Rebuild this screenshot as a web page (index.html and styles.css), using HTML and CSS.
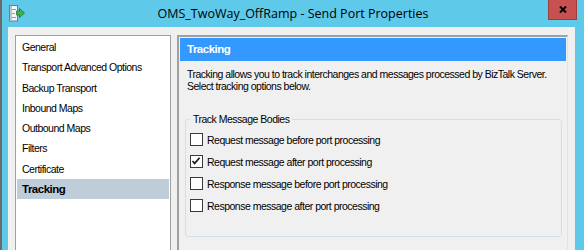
FILE: index.html
```html
<!DOCTYPE html>
<html>
<head>
<meta charset="utf-8">
<link rel="stylesheet" href="styles.css">
</head>
<body>
<div class="window">
  <div class="titlebar">
    <div class="tb-left">
      <svg class="app-icon" width="16" height="17" viewBox="0 0 16 17">
        <rect x="0.5" y="0.5" width="8" height="15.5" fill="#F6F7F9" stroke="#6A7E9C"/>
        <rect x="1" y="1" width="2" height="14.5" fill="#B9C6D8"/>
        <line x1="3" y1="4.5" x2="7" y2="4.5" stroke="#8C9BB3"/>
        <line x1="3" y1="8.5" x2="6" y2="8.5" stroke="#8C9BB3"/>
        <line x1="3" y1="12.5" x2="7" y2="12.5" stroke="#8C9BB3"/>
        <polygon points="7.5,6 10.5,6 10.5,3.5 15.5,8 10.5,12.5 10.5,10 7.5,10" fill="#43B14B" stroke="#23792B" stroke-width="0.8"/>
      </svg>
    </div>
    <div class="title">OMS_TwoWay_OffRamp - Send Port Properties</div>
    <div class="tb-right">
      <div class="close">
        <svg width="8" height="7" viewBox="0 0 8 7"><path d="M1 0.5 L7 6.5 M7 0.5 L1 6.5" stroke="#000" stroke-width="2"/></svg>
      </div>
    </div>
  </div>
  <div class="client">
    <ul class="nav">
      <li>General</li>
      <li>Transport Advanced Options</li>
      <li>Backup Transport</li>
      <li>Inbound Maps</li>
      <li>Outbound Maps</li>
      <li>Filters</li>
      <li>Certificate</li>
      <li class="selected">Tracking</li>
    </ul>
    <div class="panel">
      <div class="panel-header">Tracking</div>
      <div class="panel-body">
        <p class="desc">Tracking allows you to track interchanges and messages processed by BizTalk Server.<br>Select tracking options below.</p>
        <fieldset class="group">
          <legend>Track Message Bodies</legend>
          <div class="option"><span class="checkbox"></span><span class="label">Request message before port processing</span></div>
          <div class="option"><span class="checkbox"><svg width="11" height="11" viewBox="0 0 11 11"><path d="M1.5 5 L3.7 7.4 L8.6 1.8" fill="none" stroke="#1C1C1C" stroke-width="1.7"/></svg></span><span class="label">Request message after port processing</span></div>
          <div class="option"><span class="checkbox"></span><span class="label">Response message before port processing</span></div>
          <div class="option"><span class="checkbox"></span><span class="label">Response message after port processing</span></div>
        </fieldset>
      </div>
    </div>
  </div>
</div>
</body>
</html>
```
FILE: styles.css
```css
html, body {
  margin: 0;
  padding: 0;
}
body {
  width: 584px;
  height: 250px;
  overflow: hidden;
  background: #6B6B6B;
  font-family: "Liberation Sans", Arial, sans-serif;
  font-size: 10.5px;
  letter-spacing: -0.5px;
  color: #000;
}
.window {
  margin-left: 2px;
  height: 262px;
  background: #5FC9EA;
  display: flex;
  flex-direction: column;
}
.titlebar {
  height: 27px;
  flex: none;
  display: grid;
  grid-template-columns: 1fr auto 1fr;
}
.tb-left {
  display: flex;
  align-items: flex-start;
  padding: 5px 0 0 7px;
}
.app-icon {
  display: block;
}
.title {
  font-family: "Open Sans", "Liberation Sans", sans-serif;
  font-size: 12.5px;
  letter-spacing: 0;
  line-height: 27px;
  color: #000;
  white-space: nowrap;
}
.tb-right {
  display: flex;
  justify-content: flex-end;
  align-items: flex-start;
  padding-right: 7px;
}
.close {
  width: 29px;
  height: 20px;
  box-sizing: border-box;
  background: #C75050;
  border: 1px solid #9E3D3D;
  border-top: 0;
  display: flex;
  align-items: center;
  justify-content: center;
}
.close svg {
  display: block;
}
.client {
  flex: 1;
  margin: 0 9px 0 6px;
  background: #F0F0F0;
  display: flex;
  gap: 6px;
  padding: 8px 7px 0 7px;
}
.nav {
  width: 156px;
  box-sizing: border-box;
  flex: none;
  border: 1px solid #A0A0A0;
  background: #FFFFFF;
  margin: 0;
  padding: 1px;
  list-style: none;
}
.nav li {
  height: 20.3px;
  line-height: 20.3px;
  padding-left: 5px;
  white-space: nowrap;
}
.nav li.selected {
  background: #BFCDDB;
  font-weight: bold;
  font-size: 11.5px;
}
.panel {
  flex: 1;
  border-left: 2px solid #A0A0A0;
  border-top: 2px solid #A0A0A0;
  border-right: 1px solid #E3E3E3;
  padding: 1px 1px 0 1px;
  display: flex;
  flex-direction: column;
}
.panel-header {
  height: 23px;
  flex: none;
  background: #3399FF;
  color: #FFFFFF;
  font-weight: bold;
  font-size: 11.5px;
  line-height: 23px;
  padding-left: 7px;
}
.panel-body {
  padding: 7px 4px 0 5px;
}
.desc {
  margin: 0 0 0 2px;
  line-height: 12px;
  white-space: nowrap;
}
.group {
  margin: 21px 0 0 0;
  border: 1px solid #D5DFE5;
  border-radius: 3px;
  padding: 2.5px 0 19px 4px;
  min-width: 0;
}
.group legend {
  padding: 0 3px;
  line-height: 13px;
}
.option {
  display: flex;
  align-items: center;
  gap: 4px;
  height: 22px;
}
.checkbox {
  width: 13px;
  height: 13px;
  box-sizing: border-box;
  flex: none;
  border: 1px solid #3A3A3A;
  background: #FFFFFF;
}
.checkbox svg {
  display: block;
}
.label {
  white-space: nowrap;
}
```
